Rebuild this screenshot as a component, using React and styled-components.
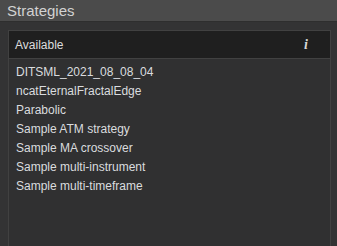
import React from 'react';
import styled, { createGlobalStyle } from 'styled-components';

const GlobalStyle = createGlobalStyle`
  html, body {
    margin: 0;
    padding: 0;
    background: #333334;
  }
  body {
    font-family: 'Liberation Sans', Arial, sans-serif;
  }
`;

const Window = styled.div`
  width: 337px;
  height: 246px;
  display: flex;
  flex-direction: column;
  background: #333334;
  overflow: hidden;
`;

const TitleBar = styled.div`
  height: 21px;
  flex: none;
  display: flex;
  align-items: center;
  padding-left: 7px;
  background: #4b4b4b;
  border-bottom: 1px solid #2e2e2e;
  color: #d2d2d2;
  font-size: 15px;
`;

const Body = styled.div`
  flex: 1;
  padding: 8px 6px 0 8px;
  display: flex;
`;

const Panel = styled.div`
  flex: 1;
  display: flex;
  flex-direction: column;
  border: 1px solid #414141;
  border-bottom: none;
  background: #303031;
`;

const Header = styled.div`
  height: 27px;
  flex: none;
  display: flex;
  align-items: center;
  justify-content: space-between;
  padding: 0 22px 0 6px;
  background: #1f1f1f;
  border-bottom: 1px solid #414141;
  color: #dcdcdc;
  font-size: 12px;
`;

const InfoIcon = styled.span`
  font-family: 'Liberation Serif', 'Times New Roman', serif;
  font-style: italic;
  font-weight: bold;
  font-size: 14px;
  color: #d8d8d8;
`;

const List = styled.ul`
  list-style: none;
  margin: 0;
  padding: 4px 0 0 7px;
`;

const Item = styled.li`
  height: 19px;
  line-height: 19px;
  color: #dadcdf;
  font-size: 12px;
`;

const strategies = [
  'DITSML_2021_08_08_04',
  'ncatEternalFractalEdge',
  'Parabolic',
  'Sample ATM strategy',
  'Sample MA crossover',
  'Sample multi-instrument',
  'Sample multi-timeframe',
];

export default function App() {
  return (
    <Window>
      <GlobalStyle />
      <TitleBar>Strategies</TitleBar>
      <Body>
        <Panel>
          <Header>
            <span>Available</span>
            <InfoIcon>i</InfoIcon>
          </Header>
          <List>
            {strategies.map((name) => (
              <Item key={name}>{name}</Item>
            ))}
          </List>
        </Panel>
      </Body>
    </Window>
  );
}
